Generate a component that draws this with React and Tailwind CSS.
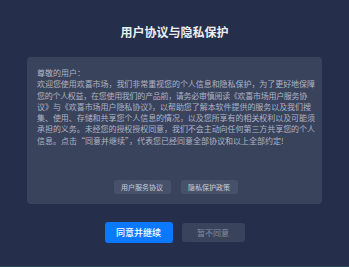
import React from 'react'

const lines = [
  '欢迎您使用欢喜市场，我们非常重视您的个人信息和隐私保护，为了更好地保障',
  '您的个人权益，在您使用我们的产品前，请务必审慎阅读《欢喜市场用户服务协',
  '议》与《欢喜市场用户隐私协议》，以帮助您了解本软件提供的服务以及我们搜',
  '集、使用、存储和共享您个人信息的情况，以及您所享有的相关权利以及可能须',
  '承担的义务。未经您的授权授权同意，我们不会主动向任何第三方共享您的个人',
]

function App() {
  return (
    <div className="w-[349px] h-[267px] bg-[#252e4a] border-b border-[#2c4a52] flex flex-col items-center font-['Noto_Sans_CJK_SC',sans-serif]">
      <h1 className="mt-[24px] text-[12px] leading-[16px] font-bold text-[#eceef3]">用户协议与隐私保护</h1>
      <div className="mt-[17px] w-[295px] h-[147px] bg-[#3a435c] rounded-[4px] pl-[10px] pt-[10px] pb-[10px] flex flex-col">
        <div className="w-[270px] text-[8px] leading-[11.3px] text-[#aeb4c5]">
          <div>尊敬的用户：</div>
          {lines.map((l, i) => (
            <div
              key={i}
              className={
                i === 1
                  ? 'whitespace-nowrap tracking-[-0.3px] [text-align-last:justify]'
                  : 'whitespace-nowrap tracking-[-0.06px] [text-align-last:justify]'
              }
            >
              {l}
            </div>
          ))}
          <div className="whitespace-nowrap">信息。点击“同意并继续”，代表您已经同意全部协议和以上全部约定!</div>
        </div>
        <div className="mt-auto flex justify-center gap-[10px] pr-[8px]">
          <button className="w-[57px] h-[14px] rounded-[3px] bg-[#48516a] text-[7px] leading-[14px] text-[#c9ced9]">用户服务协议</button>
          <button className="w-[57px] h-[14px] rounded-[3px] bg-[#48516a] text-[7px] leading-[14px] text-[#c9ced9]">隐私保护政策</button>
        </div>
      </div>
      <div className="mt-[18px] flex items-center gap-[9px]">
        <button className="w-[68px] h-[21px] rounded-[3px] bg-[#0a78ff] text-[9px] font-medium text-white">同意并继续</button>
        <button className="w-[63px] h-[19px] rounded-[3px] bg-[#3a435c] text-[8px] text-[#858da1]">暂不同意</button>
      </div>
    </div>
  )
}

export default App
